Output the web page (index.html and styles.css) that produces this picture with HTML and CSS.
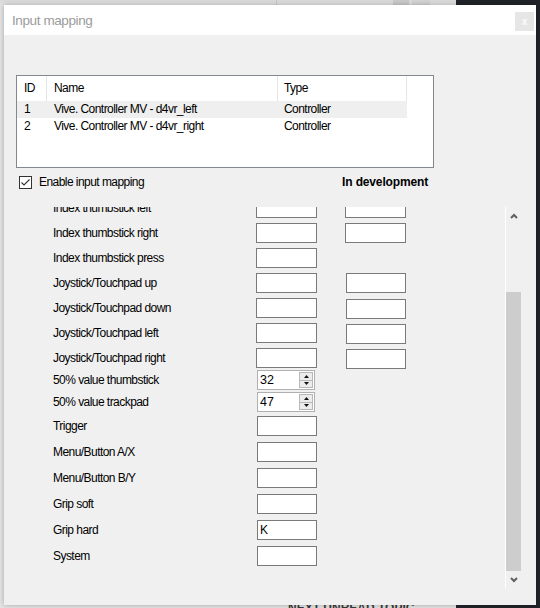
FILE: index.html
```html
<!DOCTYPE html>
<html>
<head>
<meta charset="utf-8">
<title>Input mapping</title>
<link rel="stylesheet" href="styles.css">
</head>
<body>
<div class="backdrop-top"><span class="bt1"></span><span class="bt2"></span><span class="bt3"></span></div>
<div class="backdrop-dark"></div>
<div class="backdrop-next">NEXT UNREAD TOPIC</div>

<div class="dialog">
  <div class="titlebar">
    <span class="title">Input mapping</span>
    <span class="close">x</span>
  </div>
  <div class="content">
    <div class="listview">
      <div class="lv-row lv-head"><div>ID</div><div>Name</div><div>Type</div></div>
      <div class="lv-row sel"><div>1</div><div>Vive. Controller MV - d4vr_left</div><div>Controller</div></div>
      <div class="lv-row"><div>2</div><div>Vive. Controller MV - d4vr_right</div><div>Controller</div></div>
    </div>

    <div class="check-row">
      <span class="checkbox"><svg width="11" height="11" viewBox="0 0 11 11"><polyline points="1.5,5.5 4,8 9.5,2.5" fill="none" stroke="#333" stroke-width="1.1"/></svg></span>
      <span class="check-label">Enable input mapping</span>
      <span class="dev">In development</span>
    </div>

    <div class="panel">
      <div class="panel-view">
        <div class="panel-inner">
          <div class="frow"><span class="lbl">Index thumbstick left</span><span class="box"></span><span class="box"></span></div>
          <div class="frow"><span class="lbl">Index thumbstick right</span><span class="box"></span><span class="box"></span></div>
          <div class="frow"><span class="lbl">Index thumbstick press</span><span class="box"></span></div>
          <div class="frow"><span class="lbl">Joystick/Touchpad up</span><span class="box"></span><span class="box b2s"></span></div>
          <div class="frow"><span class="lbl">Joystick/Touchpad down</span><span class="box"></span><span class="box b2s b2d"></span></div>
          <div class="frow"><span class="lbl">Joystick/Touchpad left</span><span class="box"></span><span class="box b2s b2d"></span></div>
          <div class="frow"><span class="lbl">Joystick/Touchpad right</span><span class="box"></span><span class="box b2s b2d"></span></div>
          <div class="frow spin"><span class="lbl">50% value thumbstick</span>
            <span class="spinner"><span class="spin-val">32</span><span class="spin-btns"><span class="sb"><svg width="5" height="3" viewBox="0 0 5 3"><polygon points="0,3 2.5,0 5,3" fill="#111"/></svg></span><span class="sb"><svg width="5" height="3" viewBox="0 0 5 3"><polygon points="0,0 2.5,3 5,0" fill="#111"/></svg></span></span></span>
          </div>
          <div class="frow spin"><span class="lbl">50% value trackpad</span>
            <span class="spinner"><span class="spin-val">47</span><span class="spin-btns"><span class="sb"><svg width="5" height="3" viewBox="0 0 5 3"><polygon points="0,3 2.5,0 5,3" fill="#111"/></svg></span><span class="sb"><svg width="5" height="3" viewBox="0 0 5 3"><polygon points="0,0 2.5,3 5,0" fill="#111"/></svg></span></span></span>
          </div>
          <div class="frow low"><span class="lbl">Trigger</span><span class="box"></span></div>
          <div class="frow low"><span class="lbl">Menu/Button A/X</span><span class="box"></span></div>
          <div class="frow low"><span class="lbl">Menu/Button B/Y</span><span class="box"></span></div>
          <div class="frow low"><span class="lbl">Grip soft</span><span class="box"></span></div>
          <div class="frow low"><span class="lbl">Grip hard</span><span class="box">K</span></div>
          <div class="frow low"><span class="lbl">System</span><span class="box"></span></div>
        </div>
      </div>
      <div class="vscroll">
        <div class="vs-btn"><svg width="8" height="6" viewBox="0 0 8 6"><polyline points="1,5 4,2 7,5" fill="none" stroke="#606060" stroke-width="2"/></svg></div>
        <div class="vs-track"><div class="vs-thumb"></div></div>
        <div class="vs-btn"><svg width="8" height="6" viewBox="0 0 8 6"><polyline points="1,1 4,4 7,1" fill="none" stroke="#606060" stroke-width="2"/></svg></div>
      </div>
    </div>
  </div>
</div>
</body>
</html>
```

FILE: styles.css
```css
html, body {
  margin: 0;
  padding: 0;
}
body {
  width: 540px;
  height: 608px;
  overflow: hidden;
  position: relative;
  background: #e4e4e4;
  font-family: "Liberation Sans", Arial, sans-serif;
}

/* page behind the dialog */
.backdrop-top {
  position: absolute;
  left: 0;
  top: 0;
  width: 456px;
  height: 6px;
  background: linear-gradient(#d9d9d9, #e6e6e6);
  display: flex;
}
.bt1 { margin-left: 276px; width: 1px; background: #c9c9c9; }
.bt2 { margin-left: 116px; width: 16px; background: #cacaca; }
.bt3 { margin-left: 3px; width: 18px; background: #d4d4d4; }
.backdrop-dark {
  position: absolute;
  left: 456px;
  top: 0;
  right: 0;
  bottom: 0;
  background: #202428;
}
.backdrop-next {
  position: absolute;
  left: 288px;
  top: 601px;
  font: bold 12px "Liberation Sans", Arial, sans-serif;
  color: #3a3a3a;
}

/* dialog */
.dialog {
  position: relative;
  z-index: 1;
  margin: 5px 0 0 4px;
  width: 532px;
  height: 600px;
  background: #f0f0f0;
  box-shadow: 0 0 5px rgba(0, 0, 0, 0.28);
  display: flex;
  flex-direction: column;
}
.titlebar {
  flex: none;
  height: 30px;
  background: #fff;
  display: flex;
  align-items: center;
  justify-content: space-between;
  padding: 0 2px 0 8px;
}
.title {
  font-size: 13.5px;
  letter-spacing: -0.4px;
  color: #9b9b9b;
}
.close {
  align-self: flex-start;
  margin-top: 7px;
  width: 19px;
  height: 19px;
  background: #e6e6e6;
  color: #fbfbfb;
  font: bold 10px "Liberation Sans", Arial, sans-serif;
  display: flex;
  align-items: center;
  justify-content: center;
}
.content {
  padding: 40px 0 0 12px;
  font-size: 12px;
  letter-spacing: -0.55px;
  color: #000;
}

/* list view */
.listview {
  width: 416px;
  height: 91px;
  border: 1px solid #828790;
  background: #fff;
}
.lv-row {
  display: grid;
  grid-template-columns: 30px 231px 129px;
  width: 390px;
  height: 17px;
  align-items: center;
  line-height: 17px;
  white-space: nowrap;
}
.lv-row > div:nth-child(1) { padding-left: 7px; }
.lv-row > div:nth-child(2) { padding-left: 7px; }
.lv-row > div:nth-child(3) { padding-left: 6px; }
.lv-head {
  height: 25px;
  align-items: stretch;
}
.lv-head > div {
  border-right: 1px solid #e5e5e5;
  display: flex;
  align-items: center;
}
.sel {
  background: #efefef;
}

/* checkbox row */
.check-row {
  margin-top: 7px;
  width: 412px;
  height: 14px;
  display: flex;
  align-items: center;
}
.checkbox {
  margin-left: 3px;
  width: 13px;
  height: 13px;
  box-sizing: border-box;
  border: 1px solid #333;
  background: #fff;
  display: flex;
  align-items: center;
  justify-content: center;
}
.checkbox svg { display: block; flex: none; }
.check-label {
  margin-left: 7px;
}
.dev {
  margin-left: auto;
  font-weight: bold;
  font-size: 12px;
  letter-spacing: -0.15px;
}

/* scrolling panel */
.panel {
  margin-top: 18px;
  width: 505px;
  height: 381px;
  display: flex;
}
.panel-view {
  flex: 1;
  overflow: hidden;
}
.panel-inner {
  margin-top: -12px;
}
.frow {
  display: grid;
  grid-template-columns: 175px 61px 61px;
  column-gap: 28px;
  padding-left: 37px;
  height: 25px;
  align-items: start;
}
.frow > * {
  margin-top: 3px;
}
.lbl {
  line-height: 20px;
  white-space: nowrap;
}
.box {
  height: 20px;
  box-sizing: border-box;
  border: 1px solid #7a7a7a;
  background: #fff;
  padding-left: 2px;
  line-height: 18px;
  font-size: 12px;
  letter-spacing: 0;
}
.b2s { margin-left: 1px; }
.frow > .b2d { margin-top: 4px; }

.frow.spin { height: 22px; }
.frow.spin > * { margin-top: 0; }
.frow.low { height: 26px; }
.frow.low > * { margin-top: 2px; }
.frow.low .box { margin-left: 1px; }

.spinner {
  margin-left: 1px;
  width: 58px;
  height: 20px;
  box-sizing: border-box;
  border: 1px solid #b0b0b0;
  background: #fff;
  display: flex;
  align-items: center;
  font-size: 12.5px;
  letter-spacing: 0;
}
.spin-val {
  flex: 1;
  padding-left: 2px;
}
.spin-btns {
  width: 14px;
  height: 16px;
  margin-right: 1px;
  display: flex;
  flex-direction: column;
  box-sizing: border-box;
  border: 1px solid #b8b8b8;
  background: #ececec;
}
.sb {
  flex: 1;
  display: flex;
  align-items: center;
  justify-content: center;
}
.sb + .sb {
  border-top: 1px solid #b8b8b8;
}
.sb svg { display: block; }

/* vertical scrollbar */
.vscroll {
  width: 15px;
  border-left: 1px solid #fff;
  display: flex;
  flex-direction: column;
}
.vs-btn {
  height: 17px;
  flex: none;
  display: flex;
  align-items: center;
  justify-content: center;
}
.vs-btn svg { display: block; }
.vs-track {
  flex: 1;
}
.vs-thumb {
  margin-top: 68px;
  height: 279px;
  background: #cdcdcd;
}
```
